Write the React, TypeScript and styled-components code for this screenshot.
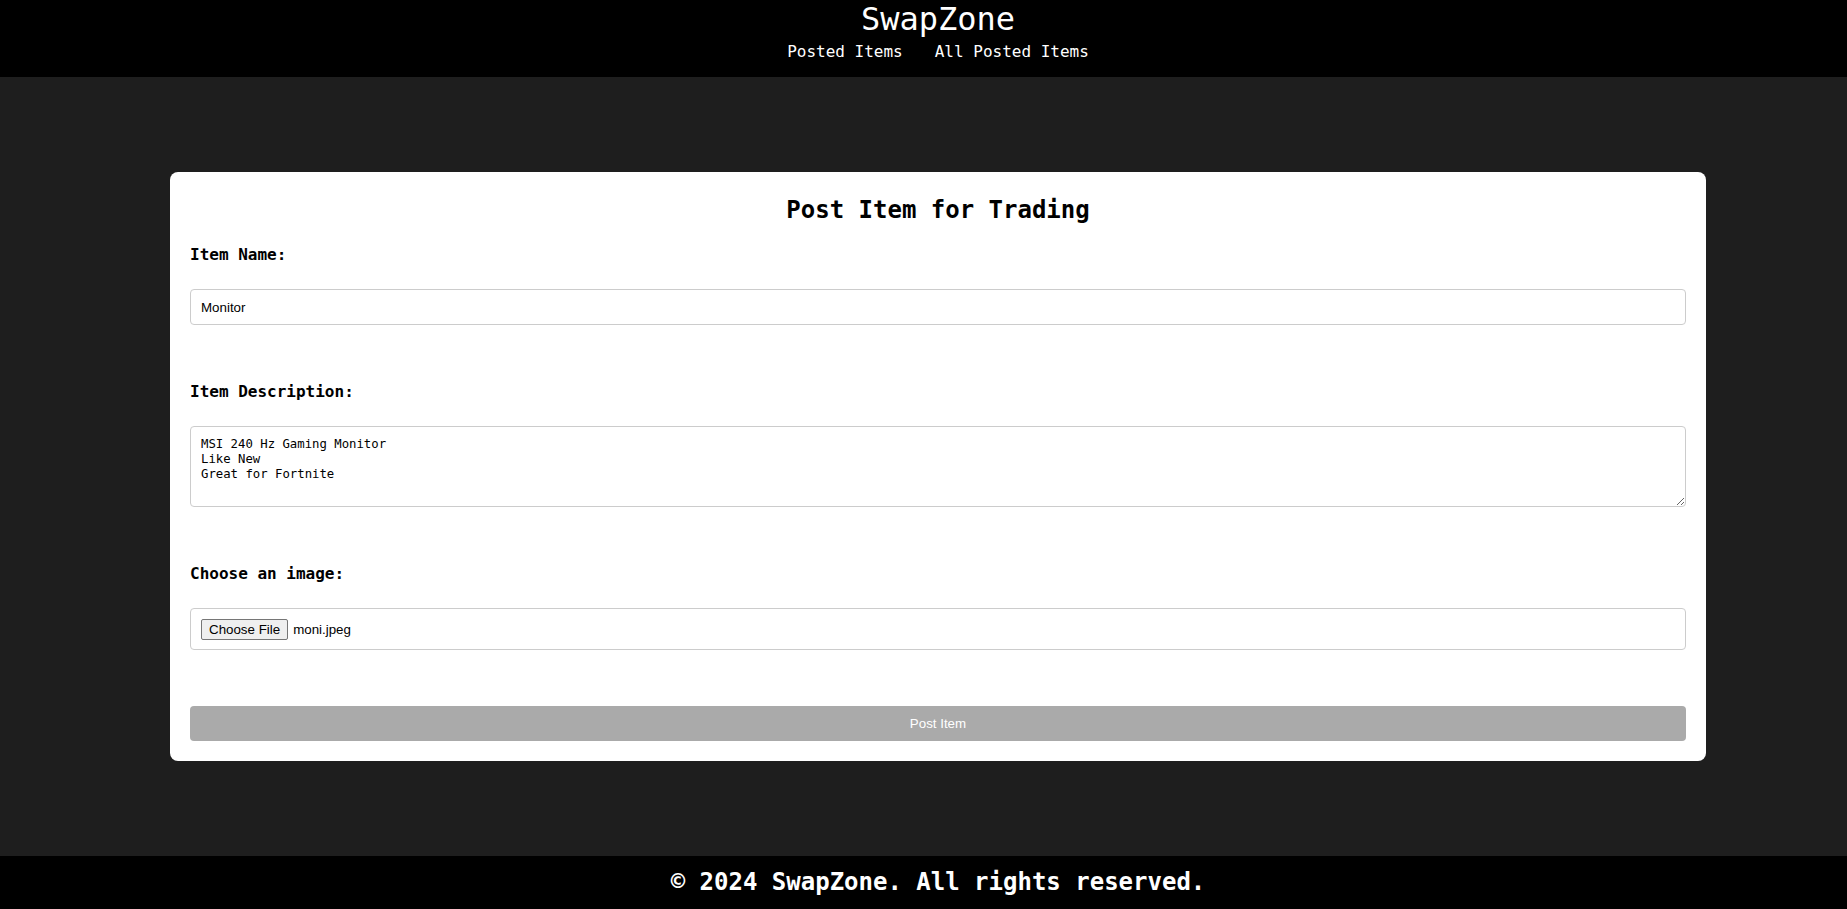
import React from 'react';
import styled, { createGlobalStyle } from 'styled-components';

const GlobalStyle = createGlobalStyle`
  html, body {
    margin: 0;
    padding: 0;
    background: #1e1e1e;
    overflow: hidden;
  }
  * {
    box-sizing: border-box;
  }
`;

const mono = `'DejaVu Sans Mono', 'Liberation Mono', monospace`;
const sans = `'Liberation Sans', Arial, sans-serif`;

const Page = styled.div`
  display: flex;
  flex-direction: column;
  width: 1876px;
  min-height: 100vh;
  font-family: ${mono};
`;

const Header = styled.header`
  background: #000;
  color: #fff;
  text-align: center;
  padding: 0 0 15px;
`;

const Brand = styled.h1`
  margin: 0;
  font-size: 32px;
  line-height: 38px;
  font-weight: 400;
`;

const Nav = styled.nav`
  display: flex;
  justify-content: center;
  gap: 32px;
  margin-top: 4px;
`;

const NavLink = styled.a`
  color: #fff;
  text-decoration: none;
  font-size: 16px;
  line-height: 20px;
`;

const Main = styled.main`
  flex: 1;
  display: flex;
  align-items: center;
  justify-content: center;
  background: #1e1e1e;
`;

const Card = styled.form`
  width: 1536px;
  background: #fff;
  border-radius: 8px;
  padding: 20px;
  display: flex;
  flex-direction: column;
`;

const Title = styled.h2`
  margin: 4px 0 21px;
  text-align: center;
  font-size: 24px;
  line-height: 28px;
  font-weight: 700;
  color: #000;
`;

const Field = styled.div<{ $gap: number }>`
  display: flex;
  flex-direction: column;
  margin-bottom: ${(p) => p.$gap}px;
`;

const Label = styled.label`
  display: block;
  font-size: 16px;
  line-height: 20px;
  font-weight: 700;
  color: #000;
  margin-bottom: 24px;
`;

const TextInput = styled.input`
  height: 36px;
  width: 100%;
  border: 1px solid #ccc;
  border-radius: 4px;
  padding: 0 10px;
  font-family: ${sans};
  font-size: 13.33px;
  color: #000;
  outline: none;
`;

const TextArea = styled.textarea`
  height: 81px;
  width: 100%;
  border: 1px solid #ccc;
  border-radius: 4px;
  padding: 10px;
  font-family: ${mono};
  font-size: 12.3px;
  line-height: 15px;
  color: #000;
  resize: vertical;
  outline: none;
`;

const FileBox = styled.div`
  height: 42px;
  display: flex;
  align-items: center;
  gap: 5px;
  border: 1px solid #ccc;
  border-radius: 4px;
  padding: 0 10px;
  font-family: ${sans};
  font-size: 13.33px;
  color: #000;
`;

const FileButton = styled.button`
  height: 21px;
  padding: 0 7px;
  border: 1px solid #767676;
  border-radius: 2px;
  background: #efefef;
  font-family: ${sans};
  font-size: 13.33px;
  color: #000;
`;

const SubmitButton = styled.button`
  height: 35px;
  width: 100%;
  border: none;
  border-radius: 4px;
  background: #aaa;
  color: #fff;
  font-family: ${sans};
  font-size: 13.33px;
`;

const Footer = styled.footer`
  background: #000;
  color: #fff;
  text-align: center;
  padding: 12px 0 13px;
  font-size: 24px;
  line-height: 28px;
  font-weight: 700;
`;

export default function App() {
  return (
    <Page>
      <GlobalStyle />
      <Header>
        <Brand>SwapZone</Brand>
        <Nav>
          <NavLink href="#">Posted Items</NavLink>
          <NavLink href="#">All Posted Items</NavLink>
        </Nav>
      </Header>

      <Main>
        <Card onSubmit={(e) => e.preventDefault()}>
          <Title>Post Item for Trading</Title>

          <Field $gap={57}>
            <Label htmlFor="item-name">Item Name:</Label>
            <TextInput id="item-name" defaultValue="Monitor" />
          </Field>

          <Field $gap={57}>
            <Label htmlFor="item-desc">Item Description:</Label>
            <TextArea
              id="item-desc"
              defaultValue={'MSI 240 Hz Gaming Monitor\nLike New\nGreat for Fortnite'}
            />
          </Field>

          <Field $gap={56}>
            <Label>Choose an image:</Label>
            <FileBox>
              <FileButton type="button">Choose File</FileButton>
              <span>moni.jpeg</span>
            </FileBox>
          </Field>

          <SubmitButton type="submit">Post Item</SubmitButton>
        </Card>
      </Main>

      <Footer>© 2024 SwapZone. All rights reserved.</Footer>
    </Page>
  );
}
